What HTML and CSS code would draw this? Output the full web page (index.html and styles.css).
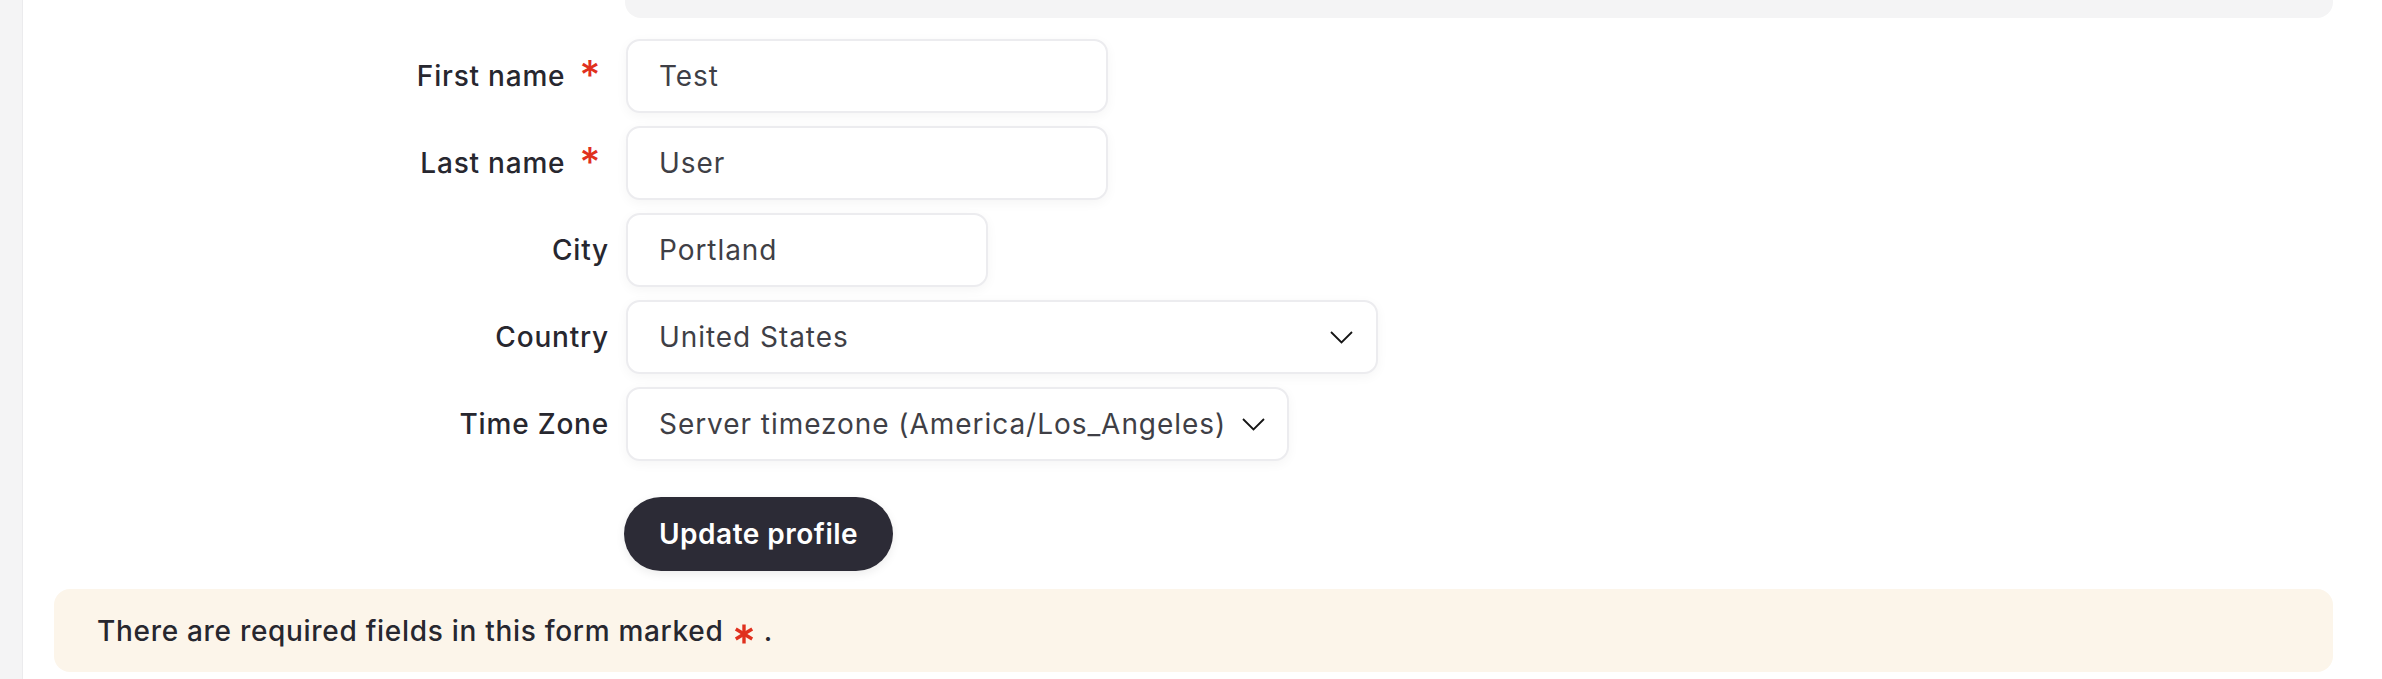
FILE: index.html
```html
<!DOCTYPE html>
<html lang="en">
<head>
<meta charset="utf-8">
<title>Profile</title>
<link rel="stylesheet" href="styles.css">
</head>
<body>
<div class="app">
  <aside class="sidebar"></aside>
  <main class="main">
    <div class="panel-tail"></div>
    <form class="profile-form">
      <div class="row">
        <label class="label">First name<span class="req">*</span></label>
        <div class="field w-name">Test</div>
      </div>
      <div class="row">
        <label class="label">Last name<span class="req">*</span></label>
        <div class="field w-name">User</div>
      </div>
      <div class="row">
        <label class="label">City</label>
        <div class="field w-city">Portland</div>
      </div>
      <div class="row">
        <label class="label">Country</label>
        <div class="field select w-country">
          <span>United States</span>
          <svg class="chev" viewBox="0 0 23 13" width="23" height="13"><polyline points="1,1 11.5,11.5 22,1" fill="none" stroke="#151515" stroke-width="1.8"/></svg>
        </div>
      </div>
      <div class="row">
        <label class="label">Time Zone</label>
        <div class="field select w-tz">
          <span>Server timezone (America/Los_Angeles)</span>
          <svg class="chev" viewBox="0 0 23 13" width="23" height="13"><polyline points="1,1 11.5,11.5 22,1" fill="none" stroke="#151515" stroke-width="1.8"/></svg>
        </div>
      </div>
      <div class="row row-action">
        <span></span>
        <button type="button" class="btn">Update profile</button>
      </div>
    </form>
    <div class="notice">There are required fields in this form marked <svg class="req-icon" viewBox="0 0 20 20" width="20" height="20" aria-label="required"><g stroke="#e0301e" stroke-width="3.4" stroke-linecap="butt"><line x1="10" y1="0.5" x2="10" y2="19.5"/><line x1="1.8" y1="5" x2="18.2" y2="15"/><line x1="18.2" y1="5" x2="1.8" y2="15"/></g></svg> .</div>
  </main>
</div>
</body>
</html>
```

FILE: styles.css
```css
* { box-sizing: border-box; }

html, body {
  margin: 0;
  padding: 0;
  background: #ffffff;
}

body {
  font-family: "Inter", "Open Sans", "Liberation Sans", sans-serif;
  font-size: 28px;
  color: #27272f;
  letter-spacing: 0.8px;
}

.app {
  display: flex;
  min-height: 679px;
}

.sidebar {
  width: 23px;
  flex: none;
  background: #f4f4f5;
  border-right: 1px solid #ebebed;
}

.main {
  flex: 1;
  padding: 0 49px 0 31px;
}

.panel-tail {
  margin-left: 571px;
  height: 18px;
  background: #f4f4f5;
  border-radius: 0 0 16px 16px;
}

.profile-form {
  margin-top: 21px;
  display: flex;
  flex-direction: column;
  gap: 13px;
}

.row {
  display: grid;
  grid-template-columns: 555px auto;
  column-gap: 17px;
  align-items: center;
  justify-content: start;
}

.label {
  justify-self: end;
  font-weight: 500;
  color: #27272f;
  white-space: nowrap;
}

.req {
  display: inline-block;
  color: #e0301e;
  font-size: 40px;
  line-height: 0;
  margin-left: 14px;
  margin-right: 8px;
  position: relative;
  top: 3px;
}

.field {
  height: 74px;
  border: 2px solid #ececef;
  border-radius: 14px;
  background: #ffffff;
  box-shadow: 0 3px 12px rgba(0, 0, 0, 0.045);
  padding: 0 23px 0 31px;
  display: flex;
  align-items: center;
  color: #3f3f46;
  font-weight: 400;
  letter-spacing: 0.95px;
  white-space: nowrap;
}

.select {
  justify-content: space-between;
}

.chev {
  flex: none;
  margin-left: 16px;
}

.w-name { width: 482px; }
.w-city { width: 362px; }
.w-country { width: 752px; }
.w-tz { width: 663px; }

.row-action {
  margin-top: 23px;
}

.btn {
  justify-self: start;
  margin-left: -2px;
  height: 74px;
  padding: 0 35px;
  border: none;
  border-radius: 37px;
  background: #2c2b36;
  color: #ffffff;
  font-family: inherit;
  font-size: 28px;
  font-weight: 600;
  letter-spacing: 0.5px;
  box-shadow: 0 3px 10px rgba(0, 0, 0, 0.08);
  cursor: pointer;
}

.notice {
  margin-top: 18px;
  height: 83px;
  background: #fcf5ea;
  border-radius: 16px;
  padding-left: 43px;
  display: flex;
  align-items: center;
  font-weight: 500;
  color: #27272f;
  letter-spacing: 0.7px;
  white-space: pre;
}

.req-icon {
  margin: 0 2px;
  position: relative;
  top: 3px;
}
```
